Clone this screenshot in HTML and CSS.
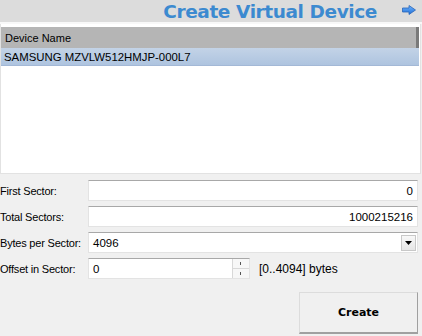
FILE: index.html
```html
<!DOCTYPE html>
<html>
<head>
<meta charset="utf-8">
<link rel="stylesheet" href="styles.css">
</head>
<body>
<div class="app">
  <div class="header">
    <span class="title">Create Virtual Device</span>
    <svg class="arrow" width="14" height="10" viewBox="0 0 14 10">
      <defs>
        <linearGradient id="ag" x1="0" y1="0" x2="0" y2="1">
          <stop offset="0" stop-color="#6fb4ff"/>
          <stop offset="1" stop-color="#1f6fd6"/>
        </linearGradient>
      </defs>
      <path d="M0.5 3 H7 V0.5 L13.5 5 L7 9.5 V7 H0.5 Z" fill="url(#ag)" stroke="#2a66b8" stroke-width="0.8"/>
    </svg>
  </div>
  <div class="list">
    <div class="list-head">Device Name</div>
    <div class="row sel">SAMSUNG MZVLW512HMJP-000L7</div>
  </div>
  <div class="form">
    <label class="lbl">First Sector:</label>
    <div class="field num">0</div>
    <label class="lbl">Total Sectors:</label>
    <div class="field num">1000215216</div>
    <label class="lbl">Bytes per Sector:</label>
    <div class="field combo"><span>4096</span><span class="dd"><svg width="7" height="4" viewBox="0 0 7 4"><path d="M0 0 H7 L3.5 4 Z" fill="#000"/></svg></span></div>
    <label class="lbl">Offset in Sector:</label>
    <div class="offset-line">
      <div class="field spin"><span>0</span><span class="spinbtn"><span class="up"></span><span class="down"></span></span></div>
      <span class="range">[0..4094] bytes</span>
    </div>
  </div>
  <div class="footer">
    <button class="create">Create</button>
  </div>
</div>
</body>
</html>
```
FILE: styles.css
```css
html, body {
  margin: 0;
  padding: 0;
  background: #f0f0f0;
}
.app {
  width: 422px;
  height: 336px;
  font-family: "DejaVu Sans", Verdana, sans-serif;
  font-size: 11px;
  color: #000;
  display: flex;
  flex-direction: column;
}
.header {
  height: 22px;
  background: #dcdcdc;
  border-bottom: 2px solid #f8f8f8;
  display: flex;
  align-items: center;
  justify-content: flex-end;
  padding-right: 6px;
}
.title {
  font-weight: bold;
  font-size: 18.5px;
  color: #3c8ad0;
  margin-right: 25px;
  letter-spacing: -0.4px;
}
.arrow {
  margin-top: -2px;
}
.list {
  height: 150px;
  background: #fff;
  border: 1px solid #e2e2e2;
  border-top: none;
  margin-right: 1px;
  padding-top: 3px;
  box-sizing: border-box;
}
.list-head {
  height: 21px;
  background: #b5b5b5;
  border-right: 3px solid #7a7a7a;
  display: flex;
  align-items: center;
  padding-left: 4px;
  font-family: "Liberation Sans", Arial, sans-serif;
  font-size: 11px;
  margin-right: 1px;
}
.row {
  height: 17px;
  display: flex;
  align-items: center;
  padding-left: 3px;
  font-family: "Liberation Sans", Arial, sans-serif;
  font-size: 11.4px;
  margin-right: 1px;
}
.row.sel {
  background: linear-gradient(#c3d3e7, #aec4df);
  border-bottom: 1px solid #a3b8d6;
}
.form {
  display: grid;
  grid-template-columns: 88px 330px;
  row-gap: 5px;
  margin-top: 6px;
  font-family: "Liberation Sans", Arial, sans-serif;
  font-size: 11px;
}
.lbl {
  display: flex;
  align-items: center;
  white-space: nowrap;
  letter-spacing: -0.2px;
}
.field {
  height: 21px;
  box-sizing: border-box;
  background: #fff;
  border: 1px solid #e3e3e3;
  border-top: 1px solid #a8a8a8;
  display: flex;
  align-items: center;
  padding: 0 4px;
  font-size: 11.5px;
}
.num {
  justify-content: flex-end;
}
.combo {
  justify-content: space-between;
  padding-right: 1px;
}
.dd {
  width: 15px;
  height: 16px;
  background: linear-gradient(#f8f8f8, #e6e6e6);
  border: 1px solid #c8c8c8;
  box-sizing: border-box;
  display: flex;
  align-items: center;
  justify-content: center;
}
.offset-line {
  display: flex;
  align-items: center;
  gap: 9px;
}
.spin {
  width: 162px;
  justify-content: space-between;
  padding-right: 0;
}
.spinbtn {
  width: 16px;
  height: 19px;
  display: flex;
  flex-direction: column;
  border-left: 1px solid #d8d8d8;
  background: #f7f7f7;
}
.up, .down {
  flex: 1;
  position: relative;
}
.up {
  border-bottom: 1px solid #d8d8d8;
}
.up::after, .down::after {
  content: "";
  position: absolute;
  left: 7px;
  width: 1px;
  height: 3px;
  background: #555;
}
.up::after { top: 3px; }
.down::after { top: 3px; }
.range {
  font-size: 12px;
}
.footer {
  flex: 1;
  display: flex;
  justify-content: flex-end;
  align-items: flex-end;
  padding: 0 4px 2px 0;
}
.create {
  width: 119px;
  height: 42px;
  background: #f0f0f0;
  border: 1px solid #dcdcdc;
  border-right: 1px solid #a0a0a0;
  border-bottom: 2px solid #a0a0a0;
  font-family: "DejaVu Sans", Verdana, sans-serif;
  font-weight: bold;
  font-size: 11px;
  padding: 0;
}
```
